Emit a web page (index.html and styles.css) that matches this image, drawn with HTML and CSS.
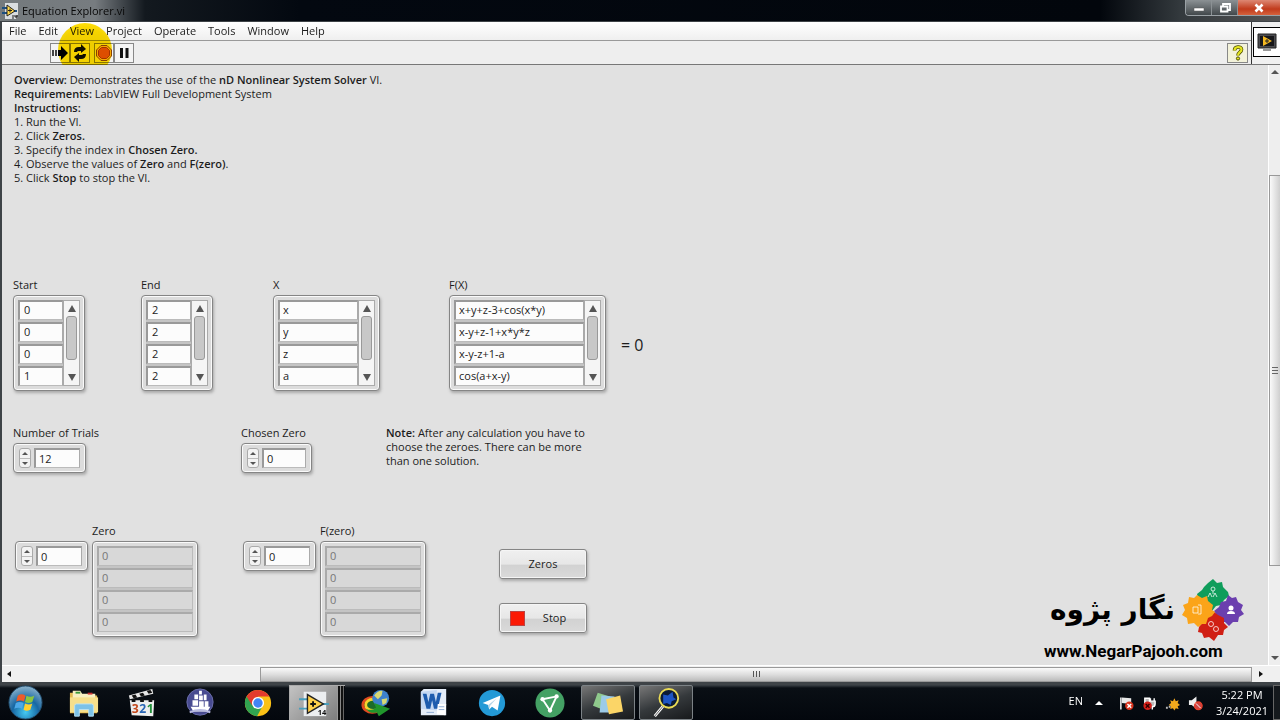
FILE: index.html
```html
<!DOCTYPE html>
<html lang="en">
<head>
<meta charset="utf-8">
<title>Equation Explorer.vi</title>
<link rel="stylesheet" href="styles.css">
</head>
<body>
<header class="titlebar">
  <svg class="title-icon" viewBox="0 0 16 16"><path d="M3 0h13v16H3z" fill="#d9dde0"/><path d="M0 5h5M0 10h5M11 8h4" stroke="#1c4f80" stroke-width="2"/><path d="M5 2v11l8-5z" fill="#ffd84a" stroke="#222"/><path d="M6 7.500h4M8 5.500v4M11 12v4M13 12v2h2v-2v4" stroke="#222" fill="none"/></svg>
  <h1 class="title">Equation Explorer.vi</h1>
  <div class="win-buttons">
    <button class="win-btn" aria-label="Minimize"><svg viewBox="0 0 12 10"><path d="M1 5h10v3H1z" fill="#fff" stroke="#555" stroke-width=".5"/></svg></button>
    <button class="win-btn" aria-label="Restore"><svg viewBox="0 0 12 10"><path d="M4 3V1h7v6H9M2 3.500h6.500v5H2z" fill="none" stroke="#fff" stroke-width="1.800"/></svg></button>
    <button class="win-btn close" aria-label="Close"><svg viewBox="0 0 12 10"><path d="M2.500 1.500l7 7M9.500 1.500l-7 7" stroke="#fff" stroke-width="2.600"/></svg></button>
  </div>
</header>

<div class="window">
  <div class="chrome">
    <div class="bars">
      <nav class="menubar">
        <button>File</button><button>Edit</button><button>View</button><button>Project</button><button>Operate</button><button>Tools</button><button>Window</button><button>Help</button>
      </nav>
      <div class="toolbar">
        <button class="tool" aria-label="Run"><svg viewBox="0 0 18 18"><path d="M1 6h2v6H1zM4 6h2v6H4z" fill="#444"/><path d="M7 6h3V2l7 7-7 7v-4H7z" fill="#000"/></svg></button>
        <button class="tool" aria-label="Run continuously"><svg viewBox="0 0 18 18"><path d="M3 8q0-5 5-5h2V0l5 5-5 4V7H8Q6 7 6 8zM15 10q0 5-5 5H8v3l-5-5 5-4v2h2q2 0 2-1z" fill="#111"/></svg></button>
        <button class="tool abort" aria-label="Abort"><svg viewBox="0 0 18 18"><path d="M6 1.500h6l4.500 4.500v6L12 16.500H6L1.500 12V6z" fill="#f6c200" stroke="#8a4a00"/><path d="M6.500 3.500h5l3 3v5l-3 3h-5l-3-3v-5z" fill="#dd5a12" stroke="#a33a00"/></svg></button>
        <button class="tool" aria-label="Pause"><svg viewBox="0 0 18 18"><path d="M5 4h3v10H5zM10.500 4h3v10h-3z" fill="#111"/></svg></button>
        <button class="tool help" aria-label="Context help"><svg viewBox="0 0 18 18"><path d="M5.500 6.500C5.500 2 12.500 2 12.500 5.500c0 3-3.500 2.500-3.500 6" fill="none" stroke="#4b4b00" stroke-width="3.600"/><path d="M5.500 6.500C5.500 2 12.500 2 12.500 5.500c0 3-3.500 2.500-3.500 6" fill="none" stroke="#e6e620" stroke-width="2.200"/><circle cx="9" cy="14.500" r="1.600" fill="#e6e620" stroke="#4b4b00"/></svg></button>
      </div>
    </div>
    <div class="vi-pane"><div class="vi-icon"><svg viewBox="0 0 20 20"><path d="M1 2h18v14H1z" fill="#4b4b4f" stroke="#222"/><path d="M3 4h14v10H3z" fill="#17171a"/><path d="M6 4v10l9-5z" fill="#f5b921"/><path d="M8 9h4M10 7v4" stroke="#222" stroke-width="1"/><path d="M8 16h4v1h2v2H6v-2h2z" fill="#999"/></svg></div></div>
  </div>
  <div class="highlight"></div>

  <div class="body">
    <main class="panel">
      <div class="instructions">
        <p><b>Overview:</b> Demonstrates the use of the <b>nD Nonlinear System Solver</b> VI.</p>
        <p><b>Requirements:</b> LabVIEW Full Development System</p>
        <p><b>Instructions:</b></p>
        <p>1. Run the VI.</p>
        <p>2. Click <b>Zeros.</b></p>
        <p>3. Specify the index in <b>Chosen Zero.</b></p>
        <p>4. Observe the values of <b>Zero</b> and <b>F(zero)</b>.</p>
        <p>5. Click <b>Stop</b> to stop the VI.</p>
      </div>

      <div class="row arrays">
        <div class="field">
          <label for="s0">Start</label>
          <div class="frame">
            <div class="cells num"><input id="s0" value="0"><input aria-label="Start 2" value="0"><input aria-label="Start 3" value="0"><input aria-label="Start 4" value="1"></div>
            <div class="mini-scroll"><i class="up"></i><i class="thumb"></i><i class="down"></i></div>
          </div>
        </div>
        <div class="field">
          <label for="e0">End</label>
          <div class="frame">
            <div class="cells num"><input id="e0" value="2"><input aria-label="End 2" value="2"><input aria-label="End 3" value="2"><input aria-label="End 4" value="2"></div>
            <div class="mini-scroll"><i class="up"></i><i class="thumb"></i><i class="down"></i></div>
          </div>
        </div>
        <div class="field">
          <label for="x0">X</label>
          <div class="frame">
            <div class="cells var"><input id="x0" value="x"><input aria-label="X 2" value="y"><input aria-label="X 3" value="z"><input aria-label="X 4" value="a"></div>
            <div class="mini-scroll"><i class="up"></i><i class="thumb"></i><i class="down"></i></div>
          </div>
        </div>
        <div class="field">
          <label for="f0">F(X)</label>
          <div class="frame">
            <div class="cells func"><input id="f0" value="x+y+z-3+cos(x*y)"><input aria-label="F(X) 2" value="x-y+z-1+x*y*z"><input aria-label="F(X) 3" value="x-y-z+1-a"><input aria-label="F(X) 4" value="cos(a+x-y)"></div>
            <div class="mini-scroll"><i class="up"></i><i class="thumb"></i><i class="down"></i></div>
          </div>
        </div>
        <div class="equals">= 0</div>
      </div>

      <div class="row settings">
        <div class="field">
          <label for="trials">Number of Trials</label>
          <div class="frame spin"><span class="stepper"><button aria-label="Increase trials"></button><button aria-label="Decrease trials"></button></span><input id="trials" value="12"></div>
        </div>
        <div class="field">
          <label for="chosen">Chosen Zero</label>
          <div class="frame spin narrow"><span class="stepper"><button aria-label="Increase chosen zero"></button><button aria-label="Decrease chosen zero"></button></span><input id="chosen" value="0"></div>
        </div>
        <p class="note"><b>Note:</b> After any calculation you have to choose the zeroes. There can be more than one solution.</p>
      </div>

      <div class="row results">
        <div class="result">
          <div class="frame spin"><span class="stepper"><button aria-label="Increase zero index"></button><button aria-label="Decrease zero index"></button></span><input aria-label="Zero index" value="0"></div>
          <div class="field">
            <label for="z0">Zero</label>
            <div class="frame"><div class="cells out"><input id="z0" value="0" readonly><input aria-label="Zero 2" value="0" readonly><input aria-label="Zero 3" value="0" readonly><input aria-label="Zero 4" value="0" readonly></div></div>
          </div>
        </div>
        <div class="result">
          <div class="frame spin"><span class="stepper"><button aria-label="Increase F(zero) index"></button><button aria-label="Decrease F(zero) index"></button></span><input aria-label="F(zero) index" value="0"></div>
          <div class="field">
            <label for="fz0">F(zero)</label>
            <div class="frame"><div class="cells out"><input id="fz0" value="0" readonly><input aria-label="F(zero) 2" value="0" readonly><input aria-label="F(zero) 3" value="0" readonly><input aria-label="F(zero) 4" value="0" readonly></div></div>
          </div>
        </div>
        <div class="actions">
          <button class="push">Zeros</button>
          <button class="push stop"><span class="red"></span><span class="stop-text">Stop</span></button>
        </div>
      </div>

      <div class="brand">
        <div class="brand-top">
          <span class="brand-name" lang="fa" dir="rtl">نگار پژوه</span>
          <svg class="brand-logo" viewBox="0 0 62 64">
            <path d="M31 1l4 4 5-1 1 5 5 5 1 4-5 4-3 5-5 1-4 5-5-4-9-9-1-4 5-4 2-3 4-4z" fill="#0f9d5b"/>
            <path d="M46 17l4 3 4-1 2 5 5 3-2 5 3 4-5 3-1 5-5 0-4 4-4-4-5 0-1-4-5-7 5-4 2-5 5-1z" fill="#6b3fae"/>
            <path d="M31 33l5 4 6 3 0 5 4 4-4 3-1 5-5 0-4 6-5-4-5 1-2-5-4-1 1-5 4-5z" fill="#d01f14"/>
            <path d="M15 17l5 3 5-2 1 5 5 4-1 5 3 2-3 4-4 2-2 6-4 0-4 3-4-4-6 1-1-6-5-3 3-5-2-5 5-2 1-6 5 1z" fill="#fba419"/>
            <g fill="none" stroke="#fff" stroke-opacity=".75"><circle cx="31" cy="11" r="2"/><path d="M31 13v3M26 19l2-4 2 4M31 19l2-4 2 4"/><path d="M11 29h5v6h-5zM16 27h3v9h-3"/><circle cx="29" cy="46" r="2.500"/><circle cx="34" cy="51" r="2.500"/></g>
            <circle cx="49" cy="30" r="2.500" fill="#fff"/><path d="M45 36q0-3 4-3t4 3z" fill="#fff"/>
          </svg>
        </div>
        <a class="brand-url" href="#">www.NegarPajooh.com</a>
      </div>
    </main>
    <div class="vscroll"><i class="up"></i><div class="vthumb"></div><i class="down"></i></div>
  </div>
  <div class="hscroll"><i class="left"></i><div class="hthumb"></div><i class="right"></i></div>
</div>

<footer class="taskbar">
  <button class="start" aria-label="Start menu"><svg viewBox="0 0 36 36"><defs><radialGradient id="orb" cx=".5" cy=".8" r=".8"><stop offset="0" stop-color="#45c9f2"/><stop offset=".5" stop-color="#1767a3"/><stop offset="1" stop-color="#8fb4cc"/></radialGradient></defs><circle cx="18" cy="18" r="17" fill="url(#orb)" stroke="#24506f"/><path d="M10 11q4-3 8 0l-1.500 6q-4-2-8 0z" fill="#ef5b29"/><path d="M19 11q4 2 8 0l-2 6.500q-4 2-7.500 0z" fill="#8cc63f"/><path d="M8 18.500q4-2 8 0l-1.500 6q-4-2-8 0z" fill="#4da9e8"/><path d="M17.500 19q4 2 7.500 0l-2 6.500q-4 2-7 0z" fill="#ffd02e"/></svg></button>
  <div class="tasks">
    <button class="task" aria-label="Explorer"><svg viewBox="0 0 32 32"><path d="M1 5h9l2 3h18v19H1z" fill="#e3b94f"/><path d="M4 3h8l2 3h14v10H4z" fill="#f7efc2"/><path d="M7 4h5v2H7z" fill="#3a9a3a"/><path d="M20 5h5v2h-5z" fill="#c33"/><path d="M1 10h30v16H1z" fill="#f6df8b"/><path d="M6 30V19q0-2 2-2h16q2 0 2 2v11h-5v-7H11v7z" fill="#7cc2e8" stroke="#b9e2f5"/></svg></button>
    <button class="task" aria-label="Media Player Classic"><svg viewBox="0 0 32 32"><path d="M3 13h26l-1 17-23-1z" fill="#eee"/><path d="M2 8L27 1l1 5L3 12z" fill="#e8e8e8"/><path d="M5 8l4-1 2 3-4 1zM13 6l4-1 2 3-4 1zM21 3l4-1 2 3-4 1zM5 12h4v3H5zM14 12h4v3h-4zM23 12h4v3h-4z" fill="#111"/><text x="5" y="27" class="clap" fill="#c4481c">3</text><text x="13" y="27" class="clap" fill="#2864b4">2</text><text x="21" y="27" class="clap" fill="#21903a">1</text></svg></button>
    <button class="task" aria-label="Ship"><svg viewBox="0 0 32 32"><circle cx="16" cy="15" r="14" fill="#484b91" stroke="#6d70ad"/><path d="M10 7h4v5h-4zM15 3h3v4h-3zM15 8h4v5h-4zM20 7h3v6h-3zM8 13h6v6H8zM15 14h5v6h-5zM21 14h4v6h-4zM6 20h21l-3 5H9z" fill="#fff"/><path d="M5 26q11-5 22 0" fill="none" stroke="#b9bbe0" stroke-width="2"/></svg></button>
    <button class="task" aria-label="Chrome"><svg viewBox="0 0 32 32"><circle cx="16" cy="16" r="14" fill="#fbc116"/><path d="M3.900 9A14 14 0 0 0 15 30l6-11-5-3z" fill="#31a350"/><path d="M16 9h12.100A14 14 0 0 0 3.900 9L10 19z" fill="#e33b2e"/><circle cx="16" cy="16" r="6.500" fill="#fff"/><circle cx="16" cy="16" r="5" fill="#4285f4"/></svg></button>
    <button class="task lab" aria-label="LabVIEW"><svg viewBox="0 0 32 32"><path d="M5 4h24v26H5z" fill="#eceef0"/><path d="M0 12h11M0 22h11M25 17h7" stroke="#4a9fbd" stroke-width="2"/><path d="M9 7v20l17-10z" fill="#ffd04a" stroke="#222" stroke-width="1.500"/><path d="M12 17h6M15 14v6" stroke="#111" stroke-width="2"/><text x="20" y="29" class="ver">14</text></svg></button>
    <button class="task" aria-label="Download Manager"><svg viewBox="0 0 32 32"><ellipse cx="12" cy="18" rx="10" ry="8" fill="none" stroke="#df4a20" stroke-width="3"/><ellipse cx="13" cy="18" rx="8" ry="6" fill="#1c6b2a" stroke="#f5d52d" stroke-width="3"/><circle cx="21" cy="11" r="9" fill="#3e82cd"/><path d="M14 8q4-6 9-5l-1 5-4 4zM22 12l6-1-1 5-4 2z" fill="#d8d873"/><path d="M5 22q7 3 11-1l-2-5 17 6-12 8-2-4q-7 2-12-4z" fill="#20962c"/></svg></button>
    <button class="task" aria-label="Word"><svg viewBox="0 0 32 32"><path d="M5 1h24v28H2V4z" fill="#e5edf8"/><path d="M2 4l17-2v22L2 22z" fill="#c4d8f2"/><path d="M4 6l4 16h4l2-9 2 9h4l4-17h-4l-2 10-2-9h-4l-2 9L8 6z" fill="#1d5cae"/><path d="M20 17h9l-1 12-9-1z" fill="#fff"/><path d="M21 20h6M21 23h6M8 26h8" stroke="#8aa9d2"/></svg></button>
    <button class="task" aria-label="Telegram"><svg viewBox="0 0 32 32"><circle cx="16" cy="16" r="14" fill="#2399d6"/><path d="M6 16l19-8-3 16-6-4-3 3-1-5z" fill="#fff"/><path d="M12 18l9-7-7 8-1 4z" fill="#b7d5e8"/></svg></button>
    <button class="task" aria-label="VPN"><svg viewBox="0 0 32 32"><circle cx="16" cy="16" r="15.500" fill="#44a164"/><path d="M8 12l15-3-7 15z" fill="none" stroke="#fff" stroke-width="2"/><circle cx="8" cy="12" r="2.300" fill="#fff"/><circle cx="23" cy="9" r="2.300" fill="#fff"/><circle cx="16" cy="24" r="2.300" fill="#fff"/></svg></button>
    <button class="task open" aria-label="Sticky Notes"><svg viewBox="0 0 32 32"><path d="M5 5l13 4-5 15L0 19z" fill="#8fc98c"/><path d="M9 8l14 1-1 17H7z" fill="#9ccbe8"/><path d="M14 12l15-4 3 17-15 3z" fill="#fbd567"/></svg></button>
    <button class="task open" aria-label="Magnifier"><svg viewBox="0 0 32 32"><path d="M14 18L4 30" stroke="#fff" stroke-width="3"/><path d="M14 18L4 30" stroke="#555"/><circle cx="19" cy="11" r="10" fill="#0b1b35" stroke="#eadb54" stroke-width="2"/><path d="M13 7l5 1 5-4 1 6 3 2-5 2-1 4-4-2-4 1z" fill="#1d55c4"/></svg></button>
  </div>
  <div class="tray">
    <span class="lang">EN</span>
    <svg class="caret" viewBox="0 0 8 6"><path d="M4 1l4 4H0z" fill="#fff"/></svg>
    <svg class="tray-icon" viewBox="0 0 16 16"><path d="M2 2v13" stroke="#fff" stroke-width="1.500"/><path d="M3 2l10 1v6l-10-1z" fill="#e8e8e8"/><circle cx="11" cy="11" r="4.500" fill="#d8341e"/><path d="M9 9l4 4M13 9l-4 4" stroke="#fff" stroke-width="1.500"/></svg>
    <svg class="tray-icon" viewBox="0 0 16 16"><path d="M3 3h5v9H3zM9 3v3M13 3v3M8 6h6v3q0 3-3 3v3" fill="#bbb" stroke="#fff" stroke-width="1.500"/><circle cx="6" cy="11" r="4.500" fill="#d8201a"/><path d="M4 9l4 4M8 9l-4 4" stroke="#300" stroke-width="1.500"/></svg>
    <svg class="tray-icon" viewBox="0 0 16 16"><path d="M1 13h2M4 12h2" stroke="#bbb" stroke-width="2"/><path d="M10 3l1.500 3 3-1-1 3L16 10l-2.500 1.500 1 3-3-1L10 16l-1.500-2.500-3 1 1-3L4 10l2.500-2-1-3 3 1z" fill="#f2a91c"/></svg>
    <svg class="tray-icon" viewBox="0 0 16 16"><path d="M1 5h3l5-4v13l-5-4H1z" fill="#eee"/><circle cx="11" cy="11" r="4" fill="#c44" stroke="#e8402c" stroke-width="1.500"/><path d="M8.500 8.500l5 5" stroke="#fff"/></svg>
    <div class="clock"><div>5:22 PM</div><div>3/24/2021</div></div>
    <button class="peek" aria-label="Show desktop"></button>
  </div>
</footer>
</body>
</html>
```
FILE: styles.css
```css
* { box-sizing: border-box; }
body {
  margin: 0;
  min-height: 100vh;
  display: flex;
  flex-direction: column;
  background: #05080d;
  color: #1c1c1c;
  font: 11px/14px "Open Sans", "Noto Sans", sans-serif;
}
button, input { font: inherit; color: inherit; padding: 0; margin: 0; border: 0; background: none; border-radius: 0; }
svg { display: block; }
p { margin: 0; }
b { font-weight: 600; }

.titlebar {
  height: 21px;
  display: flex;
  align-items: center;
  background: linear-gradient(90deg, #747a7d 0, #777c80 95px, #13191f 145px, #030810 300px, #02060c 1100px, #33393d 1180px, #555 100%);
}
.title-icon { width: 16px; height: 16px; margin: 0 4px 0 2px; }
.title { margin: 0; flex: 1; font-size: 11px; font-weight: 400; line-height: 18px; color: #080808; }
.win-buttons { display: flex; align-self: flex-start; height: 16px; border: 1px solid #9aa1a5; border-top: 0; border-right: 0; border-radius: 0 0 0 4px; overflow: hidden; }
.win-btn { width: 26px; height: 15px; display: grid; place-items: center; background: linear-gradient(#8b9194, #42484b); border-right: 1px solid #8b9194; }
.win-btn svg { width: 12px; height: 10px; }
.close { width: 42px; border: 0; background: linear-gradient(#dd8873, #c13b1c 60%, #d5623c); }

.window { position: relative; flex: 1; display: flex; flex-direction: column; border: solid #3e4347; border-width: 1px 0 3px 2px; background: #f0f0f0; }
.chrome { display: flex; border-bottom: 1px solid #777; }
.bars { flex: 1; }
.menubar { height: 19px; display: flex; align-items: center; gap: 12px; padding-left: 7px; line-height: 16px; border-bottom: 1px solid #999; background: linear-gradient(#fff, #efefef); }
.toolbar { height: 23px; display: flex; align-items: center; padding: 0 3px 0 48px; background: #eee; }
.tool { width: 20px; height: 20px; border: 1px solid #888; display: grid; place-items: center; background: #f4f4f4; }
.tool svg { width: 18px; height: 18px; }
.abort { margin-left: 4px; }
.help { margin-left: auto; width: 21px; background: #f3f2da; }
.vi-pane { width: 29px; border-left: 1px solid #333; padding: 5px 0 0 1px; }
.vi-icon { height: 30px; border: 1px solid #000; border-right: 0; background: #fff; display: grid; place-items: center; }
.vi-icon svg { width: 20px; height: 20px; }
.highlight { position: absolute; left: 56px; top: 1px; width: 54px; height: 54px; border-radius: 50%; background: radial-gradient(#ffdc00 60%, rgba(255, 230, 0, .8) 100%); mix-blend-mode: multiply; pointer-events: none; }

.body { flex: 1; display: flex; }
.panel { position: relative; flex: 1; background: #e1e1e1; padding: 8px 11px; }
.instructions { padding-left: 1px; }
.row { display: grid; align-items: start; }
.arrays { grid-template-columns: 128px 132px 176px 172px auto; margin-top: 93px; }
.settings { grid-template-columns: 228px 145px auto; margin-top: 35px; }
.results { grid-template-columns: 228px 256px auto; margin-top: 51px; padding-left: 2px; }
.field { display: flex; flex-direction: column; align-items: flex-start; gap: 3px; }
.field label { display: block; }

.frame {
  display: flex;
  padding: 4px;
  border: 1px solid #858585;
  border-radius: 4px;
  background: #dcdcdc;
  box-shadow: inset 0 0 0 1px #fafafa, 1px 2px 3px #aaa;
}
.frame input { display: block; min-width: 0; background: #fcfcfc; border: 1px solid #969696; border-width: 2px 1px 1px 2px; border-color: #999 #aaa #bbb #999; padding: 0 3px 1px; }
.cells { display: grid; grid-template-rows: repeat(4, 20px); gap: 2px; background: #c4c4c4; }
.num { width: 45px; }
.var { width: 80px; }
.func { width: 130px; }
.out { width: 96px; }
.cells.num input { padding-left: 4px; }
.frame .out input { background: #d8d8d8; color: #777; border-color: #aaa #bbb #bbb #aaa; }
.mini-scroll { width: 17px; display: flex; flex-direction: column; align-items: center; padding: 4px 0; background: #f5f5f5; border: 1px solid #aaa; }
.up, .down { width: 0; height: 0; border: 4px solid transparent; }
.up { border-top: 0; border-bottom: 7px solid #555; }
.down { border-bottom: 0; border-top: 7px solid #555; }
.thumb { width: 11px; height: 44px; margin: 4px 0 auto; border: 1px solid #999; border-radius: 3px; background: #c8c8c8; }
.equals { align-self: center; padding-top: 20px; font-size: 16px; line-height: 20px; }

.spin { width: 73px; height: 30px; padding: 4px; align-items: center; gap: 3px; }
.narrow { width: 71px; }
.spin input { flex: 1; width: 0; height: 20px; margin-right: 1px; }
.stepper { width: 12px; height: 20px; margin-left: 1px; display: grid; grid-template-rows: 1fr 1fr; border: 1px solid #aaa; border-radius: 3px; background: #f3f3f3; }
.stepper button { display: grid; place-items: center; }
.stepper button + button { border-top: 1px solid #bbb; }
.stepper button::before { content: ""; border: 3px solid transparent; border-top: 0; border-bottom: 3px solid #555; }
.stepper button + button::before { border-bottom: 0; border-top: 3px solid #555; }
.note { width: 210px; }
.result { display: flex; gap: 4px; align-items: flex-start; }
.result > .spin { margin-top: 17px; }
.actions { display: flex; flex-direction: column; gap: 24px; padding-top: 25px; align-items: flex-start; }
.push { width: 88px; height: 30px; border: 1px solid #858585; border-radius: 3px; background: linear-gradient(#f0f0f0, #e7e7e7 50%, #d2d2d2 55%, #dadada); box-shadow: inset 0 0 0 1px #f5f5f5, 1px 2px 3px #aaa; }
.stop { display: flex; align-items: center; padding: 0 10px; }
.red { width: 15px; height: 15px; background: #fb1a05; border: 1px solid #b44; }
.stop-text { flex: 1; padding-left: 8px; }

.brand { position: absolute; right: 24px; bottom: 5px; width: 200px; color: #000; }
.brand-top { display: flex; align-items: center; justify-content: space-between; padding-left: 6px; }
.brand-name { font: 700 28px/50px "DejaVu Sans", sans-serif; white-space: nowrap; }
.brand-logo { width: 62px; height: 64px; flex: none; }
.brand-url { display: block; font: 700 17px/18px Roboto, sans-serif; color: #000; text-decoration: none; }

.vscroll { width: 12px; display: flex; flex-direction: column; align-items: center; padding: 5px 0; border-left: 1px solid #fff; background: #eee; overflow: hidden; }
.vscroll .up { border-width: 0 4px 4px; }
.vscroll .down { border-width: 4px 4px 0; }
.vthumb { width: 11px; flex: 390; margin-top: 101px; margin-bottom: 90px; border: 1px solid #999; border-right: 0; background: linear-gradient(90deg, #fafafa, #cfcfcf); display: grid; place-items: center; }
.vthumb::before { content: ""; width: 6px; height: 7px; background: repeating-linear-gradient(#666 0 1px, transparent 1px 3px); }
.hscroll { height: 17px; display: flex; align-items: center; padding: 0 17px 0 5px; border-top: 1px solid #fff; background: #f0f0f0; }
.left, .right { border: 3px solid transparent; }
.left { border-left: 0; border-right: 4px solid #111; }
.right { border-right: 0; border-left: 4px solid #111; }
.hthumb { flex: 1; height: 15px; margin: 0 7px 0 249px; border: 1px solid #999; background: linear-gradient(#fafafa, #dedede 50%, #bbb); display: grid; place-items: center; }
.hthumb::before { content: ""; width: 7px; height: 6px; background: repeating-linear-gradient(90deg, #555 0 1px, transparent 1px 3px); }

.taskbar { height: 35px; display: flex; background: linear-gradient(#3c4247 0, #0a0f15 3px, #03070d 100%); color: #fff; }
.start { width: 50px; margin-right: 7px; display: grid; place-items: center; }
.start svg { width: 35px; height: 35px; }
.tasks { flex: 1; display: flex; gap: 4px; }
.task { width: 54px; display: grid; place-items: center; }
.task svg { width: 30px; height: 30px; }
.lab { width: 56px; padding-right: 8px; border: 1px solid #aaa; border-width: 1px 0 0 1px; background: linear-gradient(90deg, transparent 47px, #999 47px 48px, #111 48px 50px, #888 50px 51px, #111 51px 53px, #666 53px 54px, #05080d 54px), linear-gradient(135deg, #c3c3c3, #777); }
.open { border: 1px solid #7c8286; border-radius: 2px; background: linear-gradient(160deg, #777, #35393c 50%, #17191b); }
.clap { font: 700 13px "Open Sans", sans-serif; }
.ver { font: 700 8px "Open Sans", sans-serif; fill: #111; }
.tray { display: flex; align-items: center; gap: 8px; }
.lang { margin-right: 4px; padding-bottom: 3px; }
.caret { width: 8px; height: 6px; margin-right: 8px; }
.tray-icon { width: 15px; height: 16px; }
.clock { width: 62px; margin-right: -8px; text-align: center; line-height: 16px; }
.peek { width: 7px; align-self: stretch; border: 1px solid #666; border-right: 0; background: #15191d; }
```
